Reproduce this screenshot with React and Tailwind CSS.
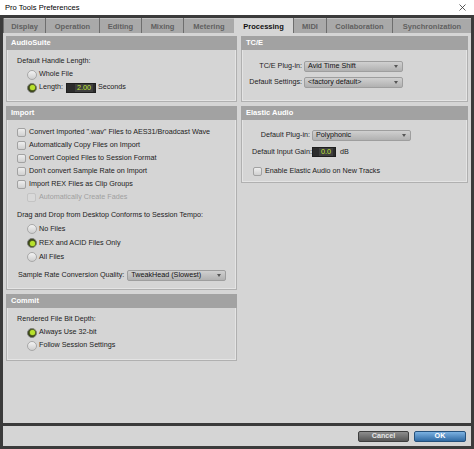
import React from "react";

const TABS = [
  { name: "Display", w: "w-[42px]" },
  { name: "Operation", w: "w-[54px]" },
  { name: "Editing", w: "w-[42px]" },
  { name: "Mixing", w: "w-[42px]" },
  { name: "Metering", w: "w-[51px]" },
  { name: "Processing", w: "w-[59px]", active: true },
  { name: "MIDI", w: "w-[33px]" },
  { name: "Collaboration", w: "w-[66px]" },
  { name: "Synchronization", w: "flex-1" },
];

function Section({ title, bodyClass, children }) {
  return (
    <div className="flex flex-col">
      <div className="h-[14px] bg-[#a2a2a2] flex items-center pl-[5px] text-white font-bold text-[7.5px]">
        {title}
      </div>
      <div
        className={`border border-t-0 border-[#b0b0b0] shadow-[inset_1px_0_0_#e4e4e4,inset_-1px_-1px_0_#e4e4e4] flex flex-col ${bodyClass}`}
      >
        {children}
      </div>
    </div>
  );
}

function Check({ label, disabled, className = "" }) {
  return (
    <div className={`h-[13px] flex items-center gap-[3px] ${className}`}>
      <span
        className={
          disabled
            ? "w-[9px] h-[9px] rounded-[2px] border border-[#c4c4c4] bg-[#d9d9d9]"
            : "w-[9px] h-[9px] rounded-[2px] border border-[#a2a2a2] bg-gradient-to-b from-[#eeeeee] to-[#d0d0d0]"
        }
      />
      <span className={disabled ? "text-[#a0a0a0]" : ""}>{label}</span>
    </div>
  );
}

function RadioDot({ on }) {
  return on ? (
    <span className="w-[10px] h-[10px] rounded-full border border-[#7c7c7c] bg-[#313c14] flex items-center justify-center shrink-0">
      <span className="w-[5px] h-[5px] rounded-full bg-[#b8e22c] shadow-[0_0_2px_#d6ff4c]" />
    </span>
  ) : (
    <span className="w-[10px] h-[10px] rounded-full border border-[#a8a8a8] bg-gradient-to-b from-[#f3f3f3] to-[#cecece] shrink-0" />
  );
}

function Radio({ label, on, className = "" }) {
  return (
    <div className={`h-[13px] flex items-center gap-[2px] ${className}`}>
      <RadioDot on={on} />
      <span>{label}</span>
    </div>
  );
}

function Select({ value, className = "" }) {
  return (
    <div
      className={`h-[11px] rounded-[2px] border border-[#9e9e9e] bg-gradient-to-b from-[#d0d0d0] to-[#b1b1b1] flex items-center justify-between pl-[3px] pr-[4px] text-[#111] shrink-0 ${className}`}
    >
      <span>{value}</span>
      <svg width="4" height="3" viewBox="0 0 4 3">
        <path d="M0 0H4L2 3Z" fill="#555" />
      </svg>
    </div>
  );
}

function NumField({ value, className = "" }) {
  return (
    <div
      className={`h-[10px] bg-[#2c2c2c] border border-[#1e1e1e] flex items-center justify-end pr-[2px] shrink-0 ${className}`}
    >
      <span className="bg-[#3e3e3e] px-[2px] text-[#c2e63a] leading-[8px]">{value}</span>
    </div>
  );
}

export default function App() {
  return (
    <div className="w-[474px] h-[449px] flex flex-col bg-[#3b3b3b] font-['Liberation_Sans',Arial,sans-serif] text-[7.2px] text-[#1c1c1c] overflow-hidden">
      {/* window title */}
      <div className="h-[15px] shrink-0 bg-white flex items-center justify-between pl-[5px] pr-[8px]">
        <span className="text-[7.6px] text-black">Pro Tools Preferences</span>
        <svg width="7" height="7" viewBox="0 0 7 7">
          <path d="M0.5 0.5L6.5 6.5M6.5 0.5L0.5 6.5" stroke="#333" strokeWidth="0.8" />
        </svg>
      </div>

      <div className="flex-1 flex flex-col p-[3px]">
        {/* tab strip */}
        <div className="h-[15px] flex">
          {TABS.map((t) =>
            t.active ? (
              <div
                key={t.name}
                className={`${t.w} bg-[#d5d5d5] flex items-center justify-center pt-[2px] font-bold text-[7.5px] text-[#111]`}
              >
                {t.name}
              </div>
            ) : (
              <div
                key={t.name}
                className={`${t.w} bg-[#a9a9a9] border-l border-[#6e6e6e] shadow-[inset_0_1px_0_#c2c2c2] flex items-center justify-center pt-[2px] font-bold text-[7.5px] text-[#606060]`}
              >
                {t.name}
              </div>
            )
          )}
        </div>

        {/* preferences panel */}
        <div className="h-[390px] bg-[#d5d5d5] flex gap-[4px] px-[3px] pt-[3px]">
          {/* left column */}
          <div className="w-[231px] flex flex-col gap-[4px]">
            <Section title="AudioSuite" bodyClass="h-[52px] pl-[10px] pt-[4px]">
              <div className="h-[14px] flex items-center">Default Handle Length:</div>
              <Radio label="Whole File" className="ml-[10px]" />
              <div className="h-[13px] flex items-center ml-[10px]">
                <RadioDot on />
                <span className="ml-[2px]">Length:</span>
                <NumField value="2.00" className="w-[30px] ml-[3px]" />
                <span className="ml-[2px]">Seconds</span>
              </div>
            </Section>

            <Section title="Import" bodyClass="h-[170px] pl-[10px] pt-[6px]">
              <Check label={'Convert Imported ".wav" Files to AES31/Broadcast Wave'} />
              <Check label="Automatically Copy Files on Import" />
              <Check label="Convert Copied Files to Session Format" />
              <Check label="Don't convert Sample Rate on Import" />
              <Check label="Import REX Files as Clip Groups" />
              <Check label="Automatically Create Fades" disabled className="ml-[10px]" />
              <div className="h-[13px] mt-[5px] flex items-center">
                Drag and Drop from Desktop Conforms to Session Tempo:
              </div>
              <Radio label="No Files" className="ml-[10px] h-[14px]" />
              <Radio label="REX and ACID Files Only" on className="ml-[10px] h-[14px]" />
              <Radio label="All Files" className="ml-[10px] h-[14px]" />
              <div className="h-[12px] mt-[5px] flex items-center gap-[3px] pl-[1px]">
                <span className="whitespace-nowrap">Sample Rate Conversion Quality:</span>
                <Select value="TweakHead (Slowest)" className="w-[99px]" />
              </div>
            </Section>

            <Section title="Commit" bodyClass="h-[53px] pl-[10px] pt-[5px]">
              <div className="h-[13px] flex items-center">Rendered File Bit Depth:</div>
              <Radio label="Always Use 32-bit" on className="ml-[10px]" />
              <Radio label="Follow Session Settings" className="ml-[10px]" />
            </Section>
          </div>

          {/* right column */}
          <div className="w-[227px] flex flex-col gap-[4px]">
            <Section title="TC/E" bodyClass="h-[52px] pl-[6px] pt-[11px]">
              <div className="flex items-center gap-[2px]">
                <span className="w-[54px] text-right whitespace-nowrap">TC/E Plug-in:</span>
                <Select value="Avid Time Shift" className="w-[99px]" />
              </div>
              <div className="flex items-center gap-[2px] mt-[5px]">
                <span className="w-[54px] text-right whitespace-nowrap">Default Settings:</span>
                <Select value="<factory default>" className="w-[99px]" />
              </div>
            </Section>

            <Section title="Elastic Audio" bodyClass="h-[63px] pl-[10px] pt-[10px]">
              <div className="flex items-center gap-[2px]">
                <span className="w-[58px] text-right whitespace-nowrap">Default Plug-in:</span>
                <Select value="Polyphonic" className="w-[99px]" />
              </div>
              <div className="flex items-center gap-[2px] mt-[6px]">
                <span className="w-[58px] text-right whitespace-nowrap">Default Input Gain:</span>
                <NumField value="0.0" className="w-[24px]" />
                <span className="ml-[2px]">dB</span>
              </div>
              <Check label="Enable Elastic Audio on New Tracks" className="mt-[7px] ml-[1px]" />
            </Section>
          </div>
        </div>

        {/* dialog buttons */}
        <div className="h-[20px] mt-[3px] bg-[#d5d5d5] flex items-center justify-end gap-[5px] pr-[5px]">
          <div className="w-[51px] h-[11px] rounded-[2px] border border-[#3e3e3e] bg-gradient-to-b from-[#8e8e8e] to-[#565656] flex items-center justify-center text-[#e6e6e6] font-bold">
            Cancel
          </div>
          <div className="w-[52px] h-[11px] rounded-[2px] border border-[#25517c] bg-gradient-to-b from-[#7cb2e2] to-[#2f6aa3] flex items-center justify-center text-white font-bold">
            OK
          </div>
        </div>
      </div>
    </div>
  );
}
